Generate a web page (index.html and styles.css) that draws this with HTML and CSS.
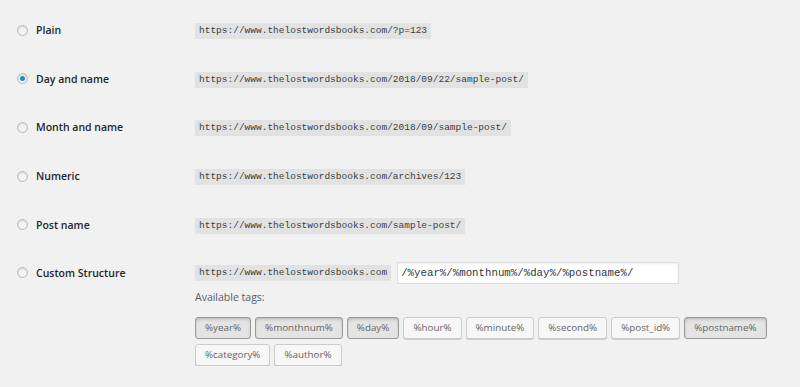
FILE: index.html
```html
<!DOCTYPE html>
<html lang="en">

<head>
    <meta charset="UTF-8">
    <meta name="viewport" content="width=device-width, initial-scale=1.0">
    <title>Permalink Settings</title>
    <link rel="stylesheet" href="styles.css">
</head>

<body>
    <div class="permalinks">
        <div class="option">
            <label class="choice"><span class="radio"></span>Plain</label>
            <div><code>https://www.thelostwordsbooks.com/?p=123</code></div>
        </div>
        <div class="option">
            <label class="choice"><span class="radio checked"></span>Day and name</label>
            <div><code>https://www.thelostwordsbooks.com/2018/09/22/sample-post/</code></div>
        </div>
        <div class="option">
            <label class="choice"><span class="radio"></span>Month and name</label>
            <div><code>https://www.thelostwordsbooks.com/2018/09/sample-post/</code></div>
        </div>
        <div class="option">
            <label class="choice"><span class="radio"></span>Numeric</label>
            <div><code>https://www.thelostwordsbooks.com/archives/123</code></div>
        </div>
        <div class="option">
            <label class="choice"><span class="radio"></span>Post name</label>
            <div><code>https://www.thelostwordsbooks.com/sample-post/</code></div>
        </div>
        <div class="option custom">
            <label class="choice"><span class="radio"></span>Custom Structure</label>
            <div>
                <div class="structure">
                    <code>https://www.thelostwordsbooks.com</code>
                    <input class="structure-input" type="text" value="/%year%/%monthnum%/%day%/%postname%/">
                </div>
                <p class="tags-title">Available tags:</p>
                <ul class="tags">
                    <li><button class="tag active">%year%</button></li>
                    <li><button class="tag active">%monthnum%</button></li>
                    <li><button class="tag active">%day%</button></li>
                    <li><button class="tag">%hour%</button></li>
                    <li><button class="tag">%minute%</button></li>
                    <li><button class="tag">%second%</button></li>
                    <li><button class="tag">%post_id%</button></li>
                    <li><button class="tag active">%postname%</button></li>
                    <li><button class="tag">%category%</button></li>
                    <li><button class="tag">%author%</button></li>
                </ul>
            </div>
        </div>
    </div>
</body>

</html>
```

FILE: styles.css
```css
body {
    margin: 0;
    background-color: #f1f1f1;
    color: #23282d;
    font-family: "Open Sans", "Noto Sans", sans-serif;
    font-size: 11px;
}

.permalinks {
    padding-top: 6px;
}

.option {
    display: grid;
    grid-template-columns: 195px auto;
    align-items: center;
    height: 48.6px;
}

/* 自訂結構那一列比較高，內容從上面排 */
.option.custom {
    height: auto;
    align-items: start;
    padding-top: 13px;
}

.choice {
    display: flex;
    align-items: center;
    gap: 8px;
    padding-left: 17px;
    font-size: 10.5px;
    font-weight: 600;
    height: 22px;
}

.radio {
    width: 9px;
    height: 9px;
    border: 1px solid #b4b9be;
    border-radius: 50%;
    background-color: #f4f4f4;
    box-shadow: inset 0 1px 2px rgba(0, 0, 0, .12);
    display: flex;
    align-items: center;
    justify-content: center;
}

.radio.checked::before {
    content: "";
    width: 5px;
    height: 5px;
    border-radius: 50%;
    background-color: #1e8cbe;
}

code {
    display: inline-block;
    padding: 2px 4px;
    background-color: #e2e2e2;
    color: #3a3f44;
    font-family: "Liberation Mono", monospace;
    font-size: 9.5px;
    line-height: 12px;
}

.structure {
    display: flex;
    align-items: center;
    gap: 6px;
    height: 22px;
}

.structure-input {
    box-sizing: border-box;
    width: 282px;
    height: 22px;
    margin: 0;
    padding: 0 3px;
    border: 1px solid #ddd;
    background-color: #fff;
    box-shadow: inset 0 1px 2px rgba(0, 0, 0, .07);
    color: #32373c;
    font-family: "Liberation Mono", monospace;
    font-size: 10.75px;
}

.tags-title {
    margin: 5px 0 12px;
    line-height: 16px;
    color: #555d66;
    font-size: 10.5px;
}

.tags {
    display: flex;
    flex-wrap: wrap;
    gap: 5px 4px;
    width: 580px;
    margin: 0;
    padding: 0;
    list-style: none;
}

.tag {
    box-sizing: border-box;
    height: 22px;
    padding: 0 9px;
    border: 1px solid #ccc;
    border-radius: 3px;
    background-color: #f7f7f7;
    box-shadow: 0 1px 0 #ccc;
    color: #666;
    font-family: "Open Sans", "Noto Sans", sans-serif;
    font-size: 9.8px;
}

.tag.active {
    border-color: #999;
    background-color: #e4e4e4;
    box-shadow: inset 0 2px 5px -3px rgba(0, 0, 0, .5);
}
```
